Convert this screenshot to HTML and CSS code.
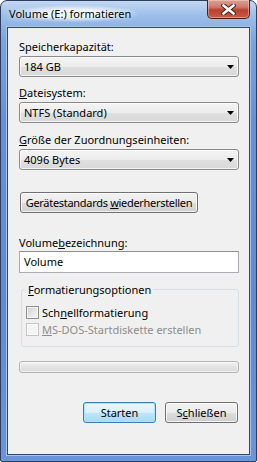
FILE: index.html
```html
<!DOCTYPE html>
<html lang="de">
<head>
  <meta charset="UTF-8">
  <title>Volume (E:) formatieren</title>
  <link rel="stylesheet" href="styles.css">
</head>
<body>
  <div class="window">
    <div class="titlebar">
      <span class="title">Volume (E:) formatieren</span>
      <button class="close-btn" aria-label="Schließen">
        <svg width="15" height="11" viewBox="0 0 15 11">
          <path d="M2.5 1.5 L12.5 9.5 M12.5 1.5 L2.5 9.5" stroke="#3a1a14" stroke-width="4.4" stroke-linecap="square"/>
          <path d="M2.5 1.5 L12.5 9.5 M12.5 1.5 L2.5 9.5" stroke="#fff" stroke-width="2.6" stroke-linecap="square"/>
        </svg>
      </button>
    </div>
    <div class="client">
      <div class="field first">
        <label>Speicherkapazität:</label>
        <div class="combo"><span>184 GB</span><svg class="arrow" width="7" height="4" viewBox="0 0 7 4"><polygon points="0,0 7,0 3.5,4" fill="#000"/></svg></div>
      </div>
      <div class="field">
        <label><u>D</u>ateisystem:</label>
        <div class="combo"><span>NTFS (Standard)</span><svg class="arrow" width="7" height="4" viewBox="0 0 7 4"><polygon points="0,0 7,0 3.5,4" fill="#000"/></svg></div>
      </div>
      <div class="field third">
        <label><u>G</u>röße der Zuordnungseinheiten:</label>
        <div class="combo"><span>4096 Bytes</span><svg class="arrow" width="7" height="4" viewBox="0 0 7 4"><polygon points="0,0 7,0 3.5,4" fill="#000"/></svg></div>
      </div>

      <button class="btn defaults-btn">Gerätestandards <u>w</u>iederherstellen</button>

      <div class="field volume-field">
        <label>Volume<u>b</u>ezeichnung:</label>
        <div class="textbox">Volume</div>
      </div>

      <fieldset class="group">
        <legend><u>F</u>ormatierungsoptionen</legend>
        <div class="check-row">
          <span class="checkbox"></span>
          <span>Sch<u>n</u>ellformatierung</span>
        </div>
        <div class="check-row disabled">
          <span class="checkbox"></span>
          <span><u>M</u>S-DOS-Startdiskette erstellen</span>
        </div>
      </fieldset>

      <div class="progress"></div>

      <div class="actions">
        <button class="btn action-btn default">Starten</button>
        <button class="btn action-btn">S<u>c</u>hließen</button>
      </div>
    </div>
  </div>
</body>
</html>
```

FILE: styles.css
```css
body {
  margin: 0;
  font-family: "Noto Sans", "Open Sans", sans-serif;
  font-size: 11px;
  color: #000;
  background: #fff;
}
u {
  text-decoration: underline;
  text-underline-offset: 1px;
}
.window {
  width: 257px;
  height: 462px;
  box-sizing: border-box;
  border: 1px solid #2d3e5e;
  border-radius: 7px 7px 2px 2px;
  padding: 0 6px 6px;
  display: flex;
  flex-direction: column;
  background: linear-gradient(to bottom, #c3d8f2 0, #9ebfe9 14px, #7aa4dd 40px, #6791d4 120px, #5f8bd0 300px, #6a95d6 100%);
}
.titlebar {
  height: 26px;
  display: flex;
  align-items: flex-start;
}
.title {
  margin-top: 4px;
  margin-left: 1px;
  padding: 0 8px 0 1px;
  line-height: 17px;
  font-size: 11px;
  border-radius: 10px;
  background: radial-gradient(ellipse at center, rgba(255,255,255,0.85) 30%, rgba(255,255,255,0) 72%);
  text-shadow: 0 0 6px #fff;
}
.close-btn {
  margin-left: auto;
  margin-top: -1px;
  margin-right: 0;
  width: 43px;
  height: 19px;
  padding: 0;
  border: 1px solid #4b1e18;
  border-top: none;
  border-radius: 0 0 5px 5px;
  background: linear-gradient(to bottom, #dba196 0, #cd7a6c 40%, #b9402f 55%, #c85a46 100%);
  box-shadow: inset 0 0 0 1px rgba(255, 220, 210, 0.45);
  display: flex;
  align-items: center;
  justify-content: center;
}
.client {
  flex: 1;
  border: 1px solid #2e4770;
  box-shadow: 0 0 0 1px #a9c3e8;
  background: #f0f0f0;
  padding: 0 10px 0 11px;
  display: flex;
  flex-direction: column;
}
.field label {
  display: block;
  line-height: 15px;
  margin-bottom: 2px;
}
.field {
  margin-top: 8px;
}
.field.first {
  margin-top: 11px;
}
.field.third {
  margin-top: 9px;
}
.combo {
  height: 21px;
  box-sizing: border-box;
  border: 1px solid #8a8a8a;
  border-radius: 3px;
  background: linear-gradient(to bottom, #f4f4f4 0, #ececec 50%, #e0e0e0 51%, #d8d8d8 100%);
  box-shadow: inset 0 0 0 1px rgba(255, 255, 255, 0.7);
  display: flex;
  align-items: center;
  padding: 0 4px 0 4px;
}
.combo span {
  flex: 1;
}
.btn {
  font-family: inherit;
  font-size: 11px;
  color: #000;
  height: 21px;
  box-sizing: border-box;
  border: 1px solid #707070;
  border-radius: 3px;
  background: linear-gradient(to bottom, #f2f2f2 0, #ebebeb 50%, #dddddd 51%, #cfcfcf 100%);
  box-shadow: inset 0 0 0 1px rgba(255, 255, 255, 0.75);
  padding: 0;
  white-space: nowrap;
}
.defaults-btn {
  margin-top: 22px;
  margin-left: 1px;
  width: 178px;
  letter-spacing: -0.3px;
}
.volume-field {
  margin-top: 22px;
}
.volume-field label {
  margin-bottom: 1px;
}
.textbox {
  height: 22px;
  box-sizing: border-box;
  border: 1px solid #abadb3;
  border-top-color: #8e8f8f;
  background: #fff;
  padding: 0 4px;
  line-height: 20px;
}
.group {
  margin: 9px 0 0 2px;
  padding: 0 4px 8px 4px;
  border: 1px solid #d5dfe5;
  border-radius: 3px;
  min-width: 0;
}
.group legend {
  padding: 0 2px;
  line-height: 15px;
}
.check-row {
  display: flex;
  align-items: center;
  height: 17px;
  gap: 3px;
}
.group legend + .check-row {
  margin-top: 7px;
}
.checkbox {
  width: 13px;
  height: 13px;
  box-sizing: border-box;
  border: 1px solid #8f8f8f;
  background: linear-gradient(135deg, #cbcfd5 0, #e8e9ea 60%, #f6f6f6 100%);
  box-shadow: inset 0 0 0 1px #f4f4f4;
}
.check-row.disabled {
  color: #8d8d8d;
}
.check-row.disabled .checkbox {
  border-color: #c4c4c4;
  background: #f4f4f4;
  box-shadow: inset 0 0 0 1px #fbfbfb;
}
.progress {
  margin-top: 14px;
  height: 12px;
  box-sizing: border-box;
  border: 1px solid #b2b2b2;
  border-radius: 3px;
  background: linear-gradient(to bottom, #f3f3f3 0, #e4e4e4 45%, #dadada 100%);
  box-shadow: inset 0 0 0 1px rgba(255, 255, 255, 0.6);
}
.actions {
  margin-top: 29px;
  display: flex;
  justify-content: flex-end;
  gap: 9px;
  padding-right: 1px;
}
.action-btn {
  width: 73px;
}
.action-btn.default {
  border-color: #3c7fb1;
  background: linear-gradient(to bottom, #eaf6fd 0, #d9f0fc 50%, #bee6fd 51%, #a7d9f5 100%);
  box-shadow: inset 0 0 0 1px #a8e3f9;
}
```
